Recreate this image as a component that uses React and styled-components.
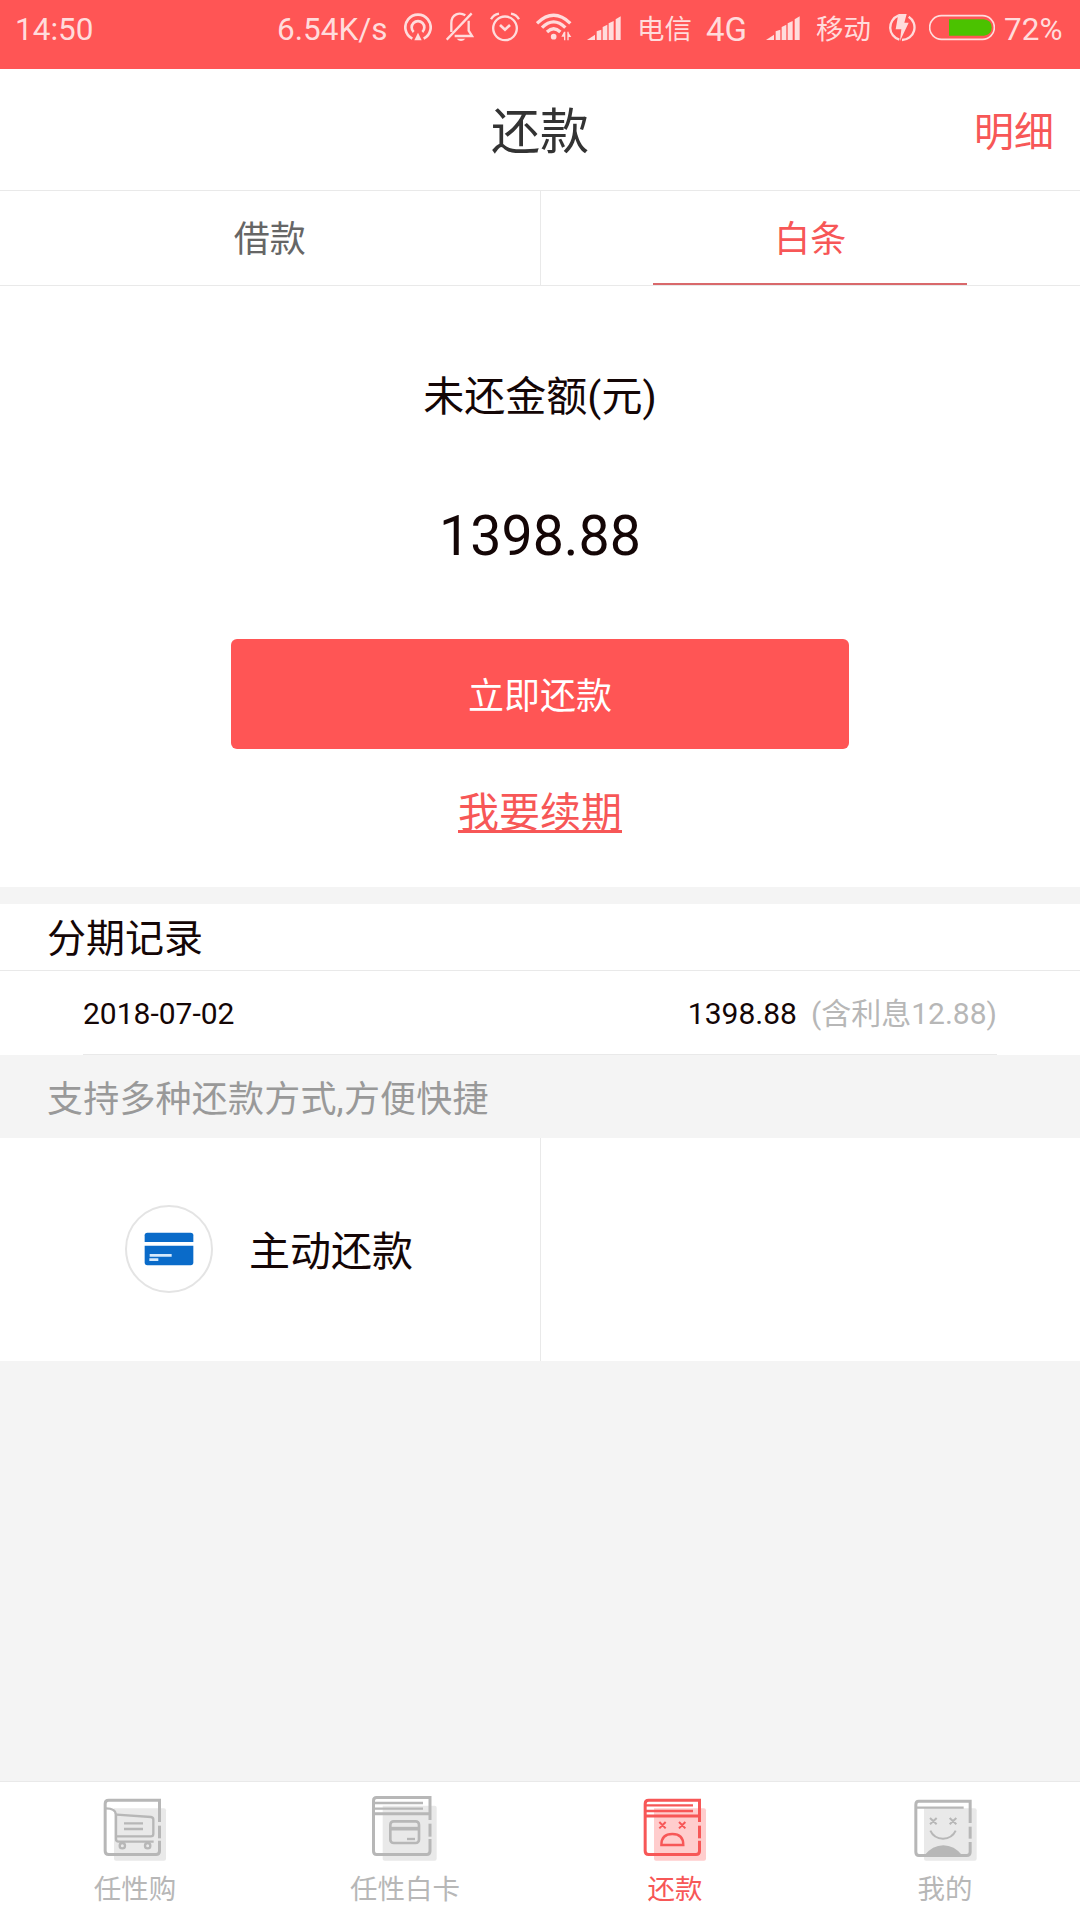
import React from 'react';
import styled, { createGlobalStyle } from 'styled-components';

const COLORS = {
  red: '#ff5555',
  redText: '#f75757',
  redLine: '#d9686b',
  status: '#ffdcdc',
  ink: '#140606',
  title: '#333333',
  tab: '#666666',
  grey: '#999999',
  lightGrey: '#b7b7b7',
  line: '#e9e9e9',
  page: '#f4f4f4',
  white: '#ffffff',
  blue: '#0a6bc9',
  green: '#4bc200',
};

const TABS = [
  { id: 'loan', label: '借款' },
  { id: 'baitiao', label: '白条' },
];

const RECORDS = [{ date: '2018-07-02', amount: '1398.88', interest: '(含利息12.88)' }];

/* status bar icons, all on a 3x grid */

const HotspotIcon = () => (
  <StatusIcon $width={28} viewBox="0 0 84 120">
    <g fill="none" stroke="currentColor" strokeWidth="8">
      <path d="M25 92 A38 38 0 1 1 59 92" />
      <path d="M29 72 A19 19 0 1 1 55 72" />
    </g>
    <path d="M42 74 L53 97 H31 Z" fill="currentColor" />
  </StatusIcon>
);

const MutedBellIcon = () => (
  <StatusIcon $width={28} $gap={14} viewBox="0 0 84 120">
    <g fill="none" stroke="currentColor" strokeWidth="7">
      <path d="M2 95 L77 16" />
      <path d="M16 72 V46 C16 16 42 12 58 22" />
      <path d="M68 38 V68 L78 84 H26" />
    </g>
    <path d="M32 92 H58 Q52 99 45 99 Q38 99 32 92 Z" fill="currentColor" />
  </StatusIcon>
);

const AlarmIcon = () => (
  <StatusIcon $width={30} $gap={16} viewBox="0 0 90 120">
    <g fill="none" stroke="currentColor" strokeWidth="7">
      <circle cx="45" cy="61" r="35.5" />
      <path d="M3 34 Q10 20 27 17" />
      <path d="M87 34 Q80 20 63 17" />
      <path d="M30 51 L45 65 L60 51" strokeWidth="8" />
    </g>
  </StatusIcon>
);

const WifiIcon = () => (
  <StatusIcon $width={36} $gap={16} viewBox="0 0 108 120">
    <g fill="none" stroke="currentColor" strokeWidth="10">
      <path d="M3 46 Q53 -2 103 46" />
      <path d="M18 59 Q53 24 88 59" />
      <path d="M33 72 Q53 53 73 72" />
    </g>
    <circle cx="53" cy="86" r="8.5" fill="currentColor" />
    <path
      d="M84 71 V97 H88 V71 Z M84 71 L76 86 H84 Z M94 71 V97 H98 V71 Z M98 87 H106 L98 75 Z"
      fill="currentColor"
    />
  </StatusIcon>
);

const SignalIcon = ({ gap }) => (
  <StatusIcon $width={34} $gap={gap} viewBox="0 0 102 120">
    <g fill="currentColor">
      <path d="M0 96 L24 80 V96 Z" />
      <path d="M29 96 V70 L43 65 V96 Z" />
      <path d="M47 96 V57 L61 50 V96 Z" />
      <path d="M65 96 V46 L80 39 V96 Z" />
      <path d="M86 96 V34 L101 25 V96 Z" />
    </g>
  </StatusIcon>
);

const ChargeIcon = () => (
  <StatusIcon $width={28} $gap={17} viewBox="0 0 84 120">
    <g fill="none" stroke="currentColor" strokeWidth="7">
      <path d="M31 23 A38 38 0 0 0 34 95" />
      <path d="M62 26 A38 38 0 0 1 42 96" />
    </g>
    <path d="M31 18 H56 L49 44 H62 L36 99 L40 64 H23 Z" fill="currentColor" />
  </StatusIcon>
);

const BatteryIcon = () => (
  <StatusIcon $width={66} $gap={13} viewBox="0 0 198 120">
    <rect
      x="2"
      y="23"
      width="194"
      height="71"
      rx="35.5"
      fill="none"
      stroke="currentColor"
      strokeWidth="5"
    />
    <path d="M60 34 H165 Q188 37 188 58.500 Q188 80 165 83 H60 Z" fill={COLORS.green} />
  </StatusIcon>
);

/* bottom navigation icons */

const FRAME =
  'M172.500 81 V15.500 H20 Q9.500 15.500 9.500 26 V168 Q9.500 178.500 20 178.500 H162 Q172.500 178.500 172.500 168 V137';

const CartIcon = () => (
  <NavIcon viewBox="0 0 198 201">
    <path className="shade" d="M36 40 H186 q6 0 6 6 V191 q0 6 -6 6 H42 q-6 0 -6 -6 Z" />
    <g fill="none" stroke="currentColor" strokeWidth="9">
      <path d={FRAME} />
      <path d="M172.500 92 V130" />
      <g strokeWidth="7">
        <path d="M12 40 Q40 40 42 58 V132 q0 8 8 8 H155" />
        <path d="M44 59 L147 66 q7 1 7 8 V116 q0 8 -8 8 H44" />
        <path d="M66 85 H123 M66 102 H123" />
        <circle cx="61" cy="152" r="8" />
        <circle cx="137" cy="152" r="8" />
      </g>
    </g>
  </NavIcon>
);

const CardBookIcon = () => (
  <NavIcon viewBox="0 0 198 201">
    <path className="shade" d="M32 32 H188 q6 0 6 6 V191 q0 6 -6 6 H38 q-6 0 -6 -6 Z" />
    <g fill="none" stroke="currentColor" strokeWidth="9">
      <path d="M174 75 V7.500 H14 Q4.500 7.500 4.500 17 V168 Q4.500 178.500 14 178.500 H164 Q174 178.500 174 168 V132" />
      <path d="M174 86 V125" />
      <path d="M4 56 H174" />
      <path d="M8 24 H153 M8 41 H153" strokeWidth="7" />
      <rect x="55" y="79" width="86" height="65" rx="10" strokeWidth="8" />
      <path d="M54 101 H141" strokeWidth="11" />
      <path d="M105 132 H129" strokeWidth="7" />
    </g>
  </NavIcon>
);

const SadBookIcon = () => (
  <NavIcon viewBox="0 0 198 201" $active>
    <path className="shade" d="M36 40 H186 q6 0 6 6 V191 q0 6 -6 6 H42 q-6 0 -6 -6 Z" />
    <g fill="none" stroke="currentColor" strokeWidth="9">
      <path d={FRAME} />
      <path d="M172.500 92 V130" />
      <path d="M9 63 H172" />
      <path d="M12 31 H153 M12 48 H153" strokeWidth="7" />
      <path d="M52 81 L71 100 M71 81 L52 100 M111 81 L130 100 M130 81 L111 100" strokeWidth="6" />
      <path d="M58 150 Q58 117 91 117 Q124 117 124 150 Z" strokeWidth="7" />
    </g>
  </NavIcon>
);

const SmileBookIcon = () => (
  <NavIcon viewBox="0 0 198 201">
    <path className="shade" d="M36 40 H188 q6 0 6 6 V191 q0 6 -6 6 H42 q-6 0 -6 -6 Z" />
    <path d="M36 182 Q62 151 94 151 Q126 151 152 182 Z" fill="currentColor" />
    <g fill="none" stroke="currentColor" strokeWidth="9">
      <path d="M174.500 84 V19 H20 Q11.500 19 11.500 29 V171 Q11.500 181.500 21 181.500 H164 Q174.500 181.500 174.500 171 V141" />
      <path d="M174.500 95 V131" />
      <path d="M14 38 H155" strokeWidth="7" />
      <path d="M54 69 L74 88 M74 69 L54 88 M113 69 L133 88 M133 69 L113 88" strokeWidth="6" />
      <path d="M55 107 Q66 131 93 131 Q120 131 131 107" strokeWidth="6" />
    </g>
  </NavIcon>
);

const BankCardIcon = () => (
  <svg width="50" height="34" viewBox="0 0 150 102">
    <path d="M2 30 V10 q0 -8 8 -8 H140 q8 0 8 8 V30 Z" fill={COLORS.blue} />
    <path d="M2 41 H148 V91 q0 9 -8 9 H10 q-8 0 -8 -9 Z" fill={COLORS.blue} />
    <path d="M17 70 H83 M16 83 H43" stroke="#d5e9fb" strokeWidth="8" />
  </svg>
);

const NAV = [
  { label: '任性购', icon: CartIcon },
  { label: '任性白卡', icon: CardBookIcon },
  { label: '还款', icon: SadBookIcon, active: true },
  { label: '我的', icon: SmileBookIcon },
];

const App = () => (
  <Page>
    <GlobalStyle />
    <StatusBar>
      <StatusText $width={80}>14:50</StatusText>
      <StatusGroup>
        <StatusText $width={127}>6.54K/s</StatusText>
        <HotspotIcon />
        <MutedBellIcon />
        <AlarmIcon />
        <WifiIcon />
        <SignalIcon gap={15} />
        <StatusText $width={55} $gap={16} $size={27.5}>
          电信
        </StatusText>
        <StatusText $width={43} $gap={14} $size={33}>
          4G
        </StatusText>
        <SignalIcon gap={17} />
        <StatusText $width={55} $gap={16} $size={27.5}>
          移动
        </StatusText>
        <ChargeIcon />
        <BatteryIcon />
        <StatusText $width={61} $gap={9}>
          72%
        </StatusText>
      </StatusGroup>
    </StatusBar>

    <Header>
      <Title>还款</Title>
      <DetailLink>明细</DetailLink>
    </Header>

    <Tabs>
      {TABS.map(({ id, label }) => (
        <Tab key={id} $active={id === 'baitiao'}>
          <span>{label}</span>
        </Tab>
      ))}
    </Tabs>

    <Summary>
      <SummaryLabel>未还金额(元)</SummaryLabel>
      <SummaryAmount>1398.88</SummaryAmount>
      <PayButton>立即还款</PayButton>
      <RenewLink>我要续期</RenewLink>
    </Summary>

    <Records>
      <RecordsTitle>分期记录</RecordsTitle>
      {RECORDS.map((record) => (
        <RecordRow key={record.date}>
          <RecordText>{record.date}</RecordText>
          <RecordText>
            {record.amount}
            <Interest>{record.interest}</Interest>
          </RecordText>
        </RecordRow>
      ))}
    </Records>

    <Hint>支持多种还款方式,方便快捷</Hint>

    <Methods>
      <Method>
        <MethodIcon>
          <BankCardIcon />
        </MethodIcon>
        <MethodLabel>主动还款</MethodLabel>
      </Method>
      <Method />
    </Methods>

    <BottomNav>
      {NAV.map(({ label, icon: Icon, active }) => (
        <NavItem key={label} $active={active}>
          <Icon />
          <NavLabel>{label}</NavLabel>
        </NavItem>
      ))}
    </BottomNav>
  </Page>
);

export default App;

const GlobalStyle = createGlobalStyle`
  * {
    box-sizing: border-box;
  }
  body {
    margin: 0;
    font-family: Roboto, "Noto Sans CJK SC", sans-serif;
    background-color: ${COLORS.page};
  }
`;

const Page = styled.div`
  display: flex;
  flex-direction: column;
  width: 1080px;
  height: 1920px;
  overflow: hidden;
  color: ${COLORS.ink};
  background-color: ${COLORS.page};
`;

const StatusBar = styled.div`
  display: flex;
  justify-content: space-between;
  height: 69px;
  padding: 8px 15px 0;
  color: ${COLORS.status};
  background-color: ${COLORS.red};
`;

const StatusGroup = styled.div`
  display: flex;
`;

const StatusText = styled.span`
  width: ${({ $width }) => $width}px;
  margin-left: ${({ $gap }) => $gap || 0}px;
  font-size: ${({ $size }) => $size || 31.5}px;
  line-height: 43px;
  white-space: nowrap;
`;

const StatusIcon = styled.svg`
  display: block;
  flex: none;
  width: ${({ $width }) => $width}px;
  height: 40px;
  margin-left: ${({ $gap }) => $gap || 0}px;
`;

const Header = styled.div`
  display: grid;
  grid-template-columns: 1fr auto 1fr;
  align-items: center;
  height: 122px;
  padding: 6px 26px 0;
  border-bottom: 1px solid ${COLORS.line};
  background-color: ${COLORS.white};
`;

const Title = styled.div`
  grid-column: 2;
  font-size: 49px;
  line-height: 60px;
  color: ${COLORS.title};
`;

const DetailLink = styled.div`
  justify-self: end;
  font-size: 40px;
  line-height: 60px;
  color: ${COLORS.redText};
`;

const Tabs = styled.div`
  display: flex;
  height: 95px;
  border-bottom: 1px solid ${COLORS.line};
  background-color: ${COLORS.white};
`;

const Tab = styled.div`
  display: flex;
  flex: 1;
  justify-content: center;
  font-size: 36px;
  line-height: 98px;
  color: ${({ $active }) => ($active ? COLORS.redText : COLORS.tab)};

  &:first-child {
    border-right: 1px solid ${COLORS.line};
  }

  span {
    width: 314px;
    height: 94px;
    text-align: center;
    border-bottom: ${({ $active }) => ($active ? `2px solid ${COLORS.redLine}` : 'none')};
  }
`;

const Summary = styled.div`
  display: flex;
  flex-direction: column;
  align-items: center;
  height: 601px;
  padding-top: 81px;
  background-color: ${COLORS.white};
`;

const SummaryLabel = styled.div`
  font-size: 41px;
  line-height: 60px;
`;

const SummaryAmount = styled.div`
  margin-top: 75px;
  font-size: 55.5px;
  line-height: 70px;
`;

const PayButton = styled.button`
  width: 618px;
  height: 110px;
  margin-top: 67px;
  padding: 0 0 2px;
  border: none;
  border-radius: 6px;
  font-family: inherit;
  font-size: 36px;
  color: ${COLORS.white};
  background-color: ${COLORS.red};
`;

const RenewLink = styled.div`
  height: 49px;
  margin-top: 35px;
  border-bottom: 3px solid ${COLORS.redText};
  font-size: 41px;
  line-height: 58px;
  color: ${COLORS.redText};
`;

const Records = styled.div`
  margin-top: 17px;
  background-color: ${COLORS.white};
`;

const RecordsTitle = styled.div`
  height: 67px;
  padding-left: 47px;
  border-bottom: 1px solid ${COLORS.line};
  font-size: 39px;
  line-height: 71px;
`;

const RecordRow = styled.div`
  display: flex;
  justify-content: space-between;
  height: 84px;
  margin: 0 83px;
  border-bottom: 1px solid ${COLORS.line};
`;

const RecordText = styled.span`
  font-size: 30px;
  line-height: 86px;
`;

const Interest = styled.span`
  margin-left: 14px;
  color: ${COLORS.lightGrey};
`;

const Hint = styled.div`
  height: 83px;
  padding-left: 47px;
  font-size: 36px;
  line-height: 90px;
  letter-spacing: 0.2px;
  color: ${COLORS.grey};
`;

const Methods = styled.div`
  display: flex;
  height: 223px;
  background-color: ${COLORS.white};
`;

const Method = styled.div`
  display: flex;
  flex: 1;
  align-items: center;
  padding: 0 0 2px 125px;

  &:first-child {
    border-right: 1px solid ${COLORS.line};
  }
`;

const MethodIcon = styled.div`
  display: flex;
  align-items: center;
  justify-content: center;
  width: 88px;
  height: 88px;
  border: 2px solid #e4e4e4;
  border-radius: 50%;
`;

const MethodLabel = styled.div`
  margin-left: 36px;
  padding-top: 6px;
  font-size: 41px;
  line-height: 60px;
`;

const BottomNav = styled.div`
  display: flex;
  height: 139px;
  margin-top: auto;
  border-top: 1px solid ${COLORS.line};
  background-color: ${COLORS.white};
`;

const NavItem = styled.div`
  display: flex;
  flex: 1;
  flex-direction: column;
  align-items: center;
  padding-top: 13px;
  color: ${({ $active }) => ($active ? COLORS.redText : COLORS.lightGrey)};
`;

const NavIcon = styled.svg`
  display: block;
  width: 66px;
  height: 67px;

  .shade {
    fill: ${({ $active }) => ($active ? '#ffcdcd' : '#e9e9e9')};
  }
`;

const NavLabel = styled.div`
  margin-top: 8px;
  font-size: 27.5px;
  line-height: 40px;
`;
